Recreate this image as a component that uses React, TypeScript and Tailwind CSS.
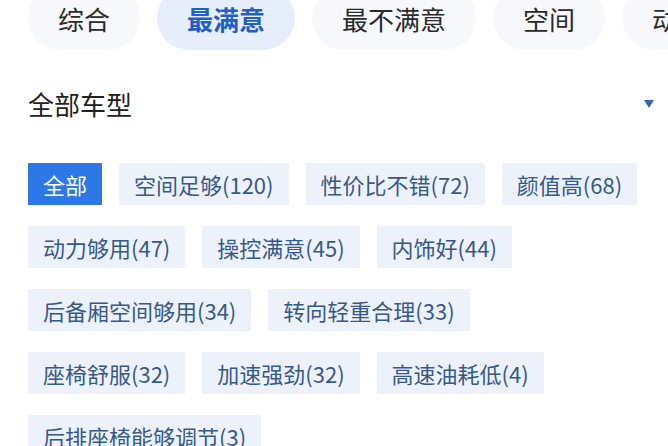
import { useState } from 'react'

const tabs = ['综合', '最满意', '最不满意', '空间', '动力']

const tags = [
  '全部',
  '空间足够(120)',
  '性价比不错(72)',
  '颜值高(68)',
  '动力够用(47)',
  '操控满意(45)',
  '内饰好(44)',
  '后备厢空间够用(34)',
  '转向轻重合理(33)',
  '座椅舒服(32)',
  '加速强劲(32)',
  '高速油耗低(4)',
  '后排座椅能够调节(3)',
]

export default function App() {
  const [activeTab, setActiveTab] = useState('最满意')
  const [activeTag, setActiveTag] = useState('全部')

  return (
    <div
      className="h-[446px] w-[668px] overflow-hidden bg-white px-[28px]"
      style={{ fontFamily: '"Noto Sans CJK SC", "Noto Sans", sans-serif' }}
    >
      {/* Tabs */}
      <div className="-mr-[28px] -mt-[14px] flex gap-[17px] overflow-hidden whitespace-nowrap">
        {tabs.map((tab) => {
          const active = tab === activeTab
          return (
            <button
              key={tab}
              onClick={() => setActiveTab(tab)}
              className={`flex h-[64px] shrink-0 items-center rounded-full px-[30px] text-[26px] ${
                active
                  ? 'bg-[#e7eefb] font-bold text-[#1f5fc6]'
                  : 'bg-[#f6f8fb] text-[#2a2a2a]'
              }`}
            >
              {tab}
            </button>
          )
        })}
      </div>

      {/* Car model select */}
      <div className="mt-[33px] -mr-[14px] flex h-[40px] items-center justify-between">
        <span className="text-[26px] text-[#222]">全部车型</span>
        <span className="mt-[2px] h-0 w-0 border-x-[5px] border-t-[8px] border-x-transparent border-t-[#3467a8]" />
      </div>

      {/* Tags */}
      <div className="mt-[40px] flex flex-wrap gap-x-[17px] gap-y-[21px]">
        {tags.map((tag) => {
          const active = tag === activeTag
          return (
            <button
              key={tag}
              onClick={() => setActiveTag(tag)}
              className={`flex h-[42px] items-center px-[15px] text-[22px] leading-none ${
                active
                  ? 'bg-[#2b78e6] text-white'
                  : 'bg-[#edf2fa] text-[#37598a]'
              }`}
            >
              {tag}
            </button>
          )
        })}
      </div>
    </div>
  )
}
